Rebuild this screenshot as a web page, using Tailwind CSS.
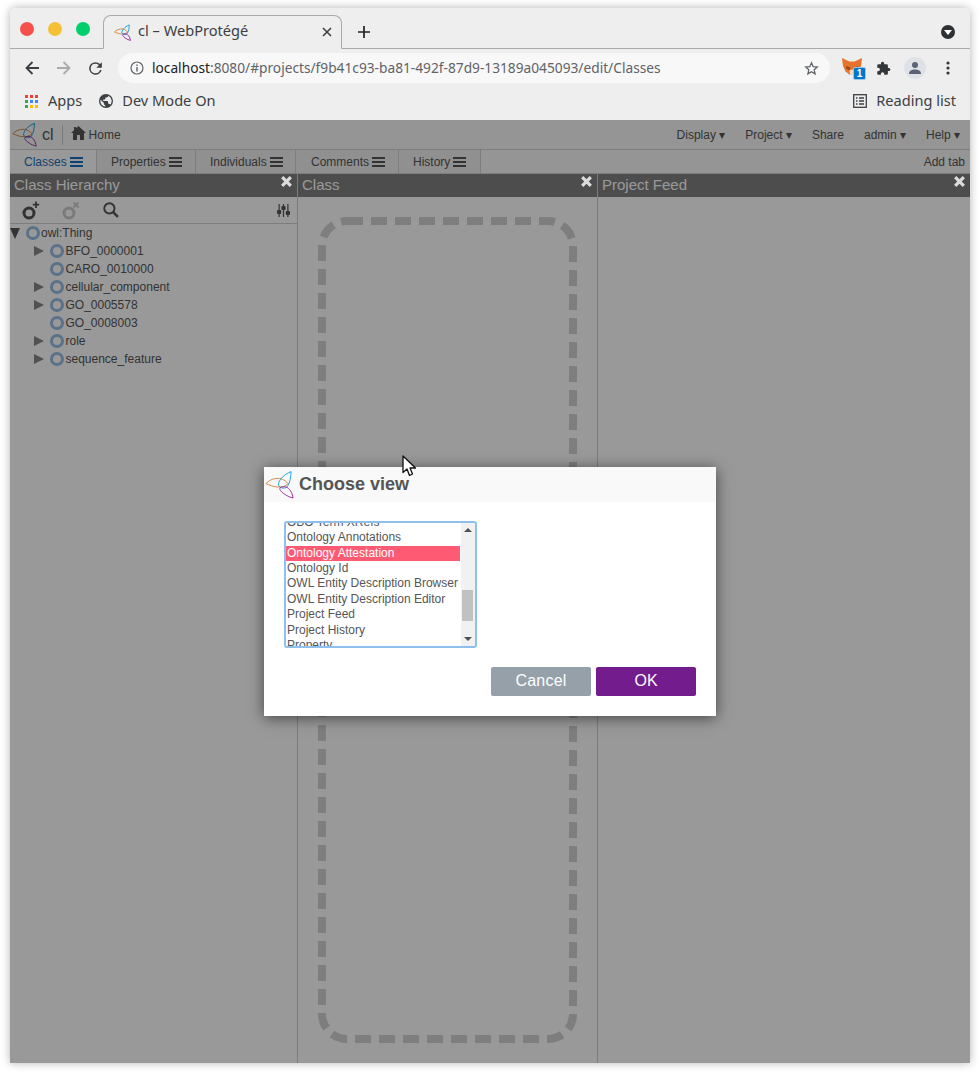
<!DOCTYPE html>
<html lang="en">
<head>
  <meta charset="UTF-8" />
  <title>cl – WebProtégé</title>
  <script src="https://cdn.jsdelivr.net/npm/@tailwindcss/browser@4"></script>
</head>
<body class="bg-white h-[1075px] overflow-hidden relative font-['Liberation_Sans',sans-serif]">
  <div class="absolute left-[10px] top-[8px] w-[960px] h-[1055px] shadow-[0_0_10px_rgba(0,0,0,0.3)] rounded-t-md flex flex-col bg-white">

    <!-- browser chrome -->
    <div class="h-[112px] bg-[#eeeeee] rounded-t-md font-['Noto_Sans',sans-serif] text-[14.6px] text-[#3c4043] shrink-0">
      <div class="h-[41px] border-b border-[#aaaaaa] flex items-end relative">
        <div class="flex gap-[14px] pl-[10px] pb-[12px] w-[93px]">
          <span class="w-[14px] h-[14px] rounded-full bg-[#f5504c] shrink-0"></span>
          <span class="w-[14px] h-[14px] rounded-full bg-[#f5c134] shrink-0"></span>
          <span class="w-[14px] h-[14px] rounded-full bg-[#00cf6b] shrink-0"></span>
        </div>
        <div class="w-[239px] h-[34px] -mb-px border border-[#aaaaaa] border-b-[#eeeeee] rounded-t-lg flex items-center pl-[10px] pr-[9px]">
          <svg class="w-[17px] h-[17px] shrink-0" viewBox="30 55 90 90" fill="none" stroke-width="5"><path d="M33 97C50 80 80 72 102 97C85 115 55 108 33 97Z" stroke="#d8873c"/><path d="M111 60C85 70 70 90 72 102C75 112 95 115 100 105C108 95 110 75 111 60Z" stroke="#1aa0d8"/><path d="M117 142C115 125 105 110 95 108C85 105 75 108 76 115C80 125 100 138 117 142Z" stroke="#9b2fa0"/></svg>
          <span class="ml-[7px] flex-1 whitespace-nowrap pb-[2px]">cl – WebProtégé</span>
          <svg class="w-[10px] h-[10px]" viewBox="0 0 10 10" stroke="#3c4043" stroke-width="1.6"><path d="M1 1L9 9M9 1L1 9"/></svg>
        </div>
        <svg class="ml-[16px] mb-[10px] w-[12px] h-[12px]" viewBox="0 0 12 12" stroke="#202124" stroke-width="1.7"><path d="M6 0V12M0 6H12"/></svg>
        <div class="ml-auto mr-[15px] mb-[9px] w-[14px] h-[14px] rounded-full bg-[#2e3134] flex items-center justify-center">
          <span class="w-0 h-0 border-x-[4px] border-x-transparent border-t-[5px] border-t-white mt-[1px]"></span>
        </div>
      </div>
      <div class="h-[38px] flex items-center pl-[15px] pr-[14px]">
        <svg class="w-[14px] h-[14px] shrink-0" viewBox="0 0 14 14" fill="none" stroke="#3c4043" stroke-width="1.8"><path d="M14 7H1.5M7.5 1L1.5 7L7.5 13"/></svg>
        <svg class="w-[14px] h-[14px] shrink-0 ml-[18px]" viewBox="0 0 14 14" fill="none" stroke="#a9abad" stroke-width="1.8"><path d="M0 7H12.5M6.5 1L12.5 7L6.5 13"/></svg>
        <svg class="w-[19px] h-[19px] shrink-0 ml-[15px]" viewBox="0 0 24 24" fill="#3c4043"><path d="M17.65 6.35A7.96 7.96 0 0 0 12 4a8 8 0 1 0 7.73 10h-2.08A6 6 0 1 1 12 6c1.66 0 3.14.69 4.22 1.78L13 11h7V4l-2.35 2.35z"/></svg>
        <div class="ml-[13px] w-[712px] h-[30px] rounded-full bg-[#f8f8f8] flex items-center pl-[12px] pr-[11px]">
          <svg class="w-[14px] h-[14px] shrink-0" viewBox="0 0 14 14" fill="none" stroke="#5f6368" stroke-width="1.2"><circle cx="7" cy="7" r="6"/><path d="M7 6V10.5M7 3.5V5" stroke-width="1.4"/></svg>
          <span class="ml-[8px] flex-1 whitespace-nowrap text-[#5f6368] text-[13.72px]"><span class="text-[#202124]">localhost</span>:8080/#projects/f9b41c93-ba81-492f-87d9-13189a045093/edit/Classes</span>
          <svg class="w-[15px] h-[15px] shrink-0" viewBox="0 0 24 24" fill="none" stroke="#5f6368" stroke-width="2"><path d="M12 3l2.7 6.1 6.6.6-5 4.4 1.5 6.5L12 17.2l-5.8 3.4 1.5-6.5-5-4.4 6.6-.6z"/></svg>
        </div>
        <div class="relative ml-[12px] w-[20px] h-[20px] shrink-0">
          <svg class="w-[20px] h-[18px]" viewBox="0 0 20 18"><path d="M0 0L7.5 3.5H12.5L20 0L19 8L16.5 13.5L12 17H8L3.5 13.5L1 8Z" fill="#e8722c"/><path d="M4 8L8.5 9.5L7.5 12L4.5 11ZM16 8L11.5 9.5L12.5 12L15.5 11Z" fill="#8a4a1c"/><path d="M7.5 12.5L10 11.5L12.5 12.5L12 17H8Z" fill="#ecd9c6"/></svg>
          <span class="absolute left-[11px] top-[9px] w-[13px] h-[13px] rounded-[2px] bg-[#0376c9] border border-white/60 text-white text-[10px] leading-[11px] font-bold text-center font-['Liberation_Sans',sans-serif]">1</span>
        </div>
        <svg class="w-[15px] h-[15px] shrink-0 ml-[14px]" viewBox="0 0 24 24" fill="#34373a"><path d="M20.5 11H19V7a2 2 0 0 0-2-2h-4V3.5a2.5 2.5 0 0 0-5 0V5H4a2 2 0 0 0-2 2v3.8h1.5a2.7 2.7 0 0 1 0 5.4H2V20a2 2 0 0 0 2 2h3.8v-1.5a2.7 2.7 0 0 1 5.4 0V22H17a2 2 0 0 0 2-2v-4h1.5a2.5 2.5 0 0 0 0-5z"/></svg>
        <div class="w-[22px] h-[22px] ml-[13px] rounded-full bg-[#dee1e6] flex items-center justify-center shrink-0">
          <svg class="w-[14px] h-[14px]" viewBox="0 0 14 14" fill="#5a6475"><circle cx="7" cy="4" r="3"/><path d="M1 13C1 9.5 4 8.5 7 8.5S13 9.5 13 13Z"/></svg>
        </div>
        <svg class="w-[4px] h-[14px] shrink-0 ml-[20px]" viewBox="0 0 4 14" fill="#34373a"><circle cx="2" cy="2" r="1.6"/><circle cx="2" cy="7" r="1.6"/><circle cx="2" cy="12" r="1.6"/></svg>
      </div>
      <div class="h-[28px] flex items-center pl-[15px] pr-[14px]">
        <svg class="w-[13px] h-[13px] shrink-0" viewBox="0 0 13 13">
          <rect width="3" height="3" fill="#ea4335"/><rect x="5" width="3" height="3" fill="#ea4335"/><rect x="10" width="3" height="3" fill="#ea4335"/>
          <rect y="5" width="3" height="3" fill="#34a853"/><rect x="5" y="5" width="3" height="3" fill="#4285f4"/><rect x="10" y="5" width="3" height="3" fill="#4285f4"/>
          <rect y="10" width="3" height="3" fill="#34a853"/><rect x="5" y="10" width="3" height="3" fill="#fbbc05"/><rect x="10" y="10" width="3" height="3" fill="#fbbc05"/>
        </svg>
        <span class="ml-[10px] pb-[1px]">Apps</span>
        <svg class="w-[14px] h-[14px] ml-[17px] shrink-0" viewBox="0 0 24 24" fill="#3c4043"><path d="M12 0a12 12 0 1 0 0 24a12 12 0 0 0 0-24zM10.8 21.5A9.6 9.6 0 0 1 2.4 12c0-.7.1-1.4.3-2.1L8.4 15.6v1.2c0 1.3 1.1 2.4 2.4 2.4zM19.1 18.5a2.4 2.4 0 0 0-2.3-1.7h-1.2v-3.6c0-.7-.5-1.2-1.2-1.2H7.2V9.6h2.4c.7 0 1.2-.5 1.2-1.2V6h2.4c1.3 0 2.4-1.1 2.4-2.4v-.5a9.6 9.6 0 0 1 3.5 15.4z"/></svg>
        <span class="ml-[9px] pb-[1px]">Dev Mode On</span>
        <svg class="w-[14px] h-[14px] ml-auto shrink-0" viewBox="0 0 14 14" fill="none" stroke="#3c4043" stroke-width="1.3"><rect x="0.7" y="0.7" width="12.6" height="12.6"/><path d="M3 4H4.5M6 4H11M3 7H4.5M6 7H11M3 10H4.5M6 10H11"/></svg>
        <span class="ml-[9px] pb-[1px]">Reading list</span>
      </div>
    </div>

    <!-- WebProtege page -->
    <div class="relative flex-1 flex flex-col text-[12px] text-[#555555] bg-white min-h-0">
      <div class="h-[30px] bg-[#f9f9f9] border-b border-[#d0d0d0] flex items-center pl-[2px] pr-[10px] shrink-0">
        <svg class="w-[25px] h-[25px] shrink-0" viewBox="30 55 90 90" fill="none" stroke-width="3.5"><path d="M33 97C50 80 80 72 102 97C85 115 55 108 33 97Z" stroke="#d8873c"/><path d="M111 60C85 70 70 90 72 102C75 112 95 115 100 105C108 95 110 75 111 60Z" stroke="#1aa0d8"/><path d="M117 142C115 125 105 110 95 108C85 105 75 108 76 115C80 125 100 138 117 142Z" stroke="#9b2fa0"/></svg>
        <span class="ml-[5px] text-[16px]">cl</span>
        <span class="ml-[8px] w-px h-[20px] bg-[#cccccc]"></span>
        <svg class="ml-[8px] w-[15px] h-[14px] mb-[3px] shrink-0" viewBox="0 0 15 14" fill="#555555"><path d="M7.5 0L15 7H13V14H9V9H6V14H2V7H0L3 4.2V1H5V2.3Z"/></svg>
        <span class="ml-[3px]">Home</span>
        <div class="ml-auto flex gap-[20px]">
          <span>Display ▾</span><span>Project ▾</span><span>Share</span><span>admin ▾</span><span>Help ▾</span>
        </div>
      </div>
      <div class="h-[24px] bg-[#f9f9f9] border-b border-[#d0d0d0] flex items-stretch shrink-0">
        <div class="w-[87px] pl-[14px] bg-[#ffffff] text-[#1a6fc0] border-r border-[#d0d0d0] flex items-center gap-[3px]">Classes<svg class="w-[13px] h-[10px]" viewBox="0 0 13 10" fill="#1a6fc0"><path d="M0 0H13V2H0ZM0 4H13V6H0ZM0 8H13V10H0Z"/></svg></div>
        <div class="w-[99px] pl-[14px] bg-[#f0f0f0] border-r border-[#d0d0d0] flex items-center gap-[3px]">Properties<svg class="w-[13px] h-[10px]" viewBox="0 0 13 10" fill="#555555"><path d="M0 0H13V2H0ZM0 4H13V6H0ZM0 8H13V10H0Z"/></svg></div>
        <div class="w-[100px] pl-[14px] bg-[#f0f0f0] border-r border-[#d0d0d0] flex items-center gap-[3px]">Individuals<svg class="w-[13px] h-[10px]" viewBox="0 0 13 10" fill="#555555"><path d="M0 0H13V2H0ZM0 4H13V6H0ZM0 8H13V10H0Z"/></svg></div>
        <div class="w-[103px] pl-[15px] bg-[#f0f0f0] border-r border-[#d0d0d0] flex items-center gap-[3px]">Comments<svg class="w-[13px] h-[10px]" viewBox="0 0 13 10" fill="#555555"><path d="M0 0H13V2H0ZM0 4H13V6H0ZM0 8H13V10H0Z"/></svg></div>
        <div class="w-[82px] pl-[14px] bg-[#f0f0f0] border-r border-[#d0d0d0] flex items-center gap-[3px]">History<svg class="w-[13px] h-[10px]" viewBox="0 0 13 10" fill="#555555"><path d="M0 0H13V2H0ZM0 4H13V6H0ZM0 8H13V10H0Z"/></svg></div>
        <span class="ml-auto pr-[5px] self-center">Add tab</span>
      </div>

      <div class="flex-1 flex min-h-0">
        <!-- class hierarchy -->
        <div class="w-[288px] border-r border-[#cfcfcf] flex flex-col shrink-0">
          <div class="h-[23px] bg-[#808080] text-white text-[15px] pl-[4px] flex items-center relative shrink-0">Class Hierarchy
            <svg class="absolute z-20 right-[5px] top-[2px] w-[11px] h-[11px]" viewBox="0 0 11 11" stroke="#dcdcdc" stroke-width="3.2"><path d="M1.2 1.2L9.8 9.8M9.8 1.2L1.2 9.8"/></svg>
          </div>
          <div class="h-[27px] border-b border-[#d0d0d0] flex items-center pl-[12px] pr-[7px] shrink-0">
            <svg class="w-[19px] h-[19px] shrink-0" viewBox="0 0 19 19" fill="none" stroke="#555555"><circle cx="7" cy="12" r="5" stroke-width="3"/><path d="M14 0.5V7M10.8 3.7H17.2" stroke-width="1.8"/></svg>
            <svg class="w-[19px] h-[19px] ml-[21px] shrink-0" viewBox="0 0 19 19" fill="none" stroke="#cccccc"><circle cx="7" cy="12" r="5" stroke-width="3"/><path d="M11.5 1.5L16.5 6.5M16.5 1.5L11.5 6.5" stroke-width="1.8"/></svg>
            <svg class="w-[16px] h-[16px] ml-[22px] shrink-0" viewBox="0 0 15 15" fill="none" stroke="#555555" stroke-width="1.8"><circle cx="6" cy="6" r="4.8"/><path d="M9.5 9.5L14 14" stroke-width="2.4"/></svg>
            <svg class="w-[13px] h-[13px] ml-auto shrink-0" viewBox="0 0 13 13" fill="#555555"><path d="M1.5 0H2.7V13H1.5ZM5.9 0H7.1V13H5.9ZM10.3 0H11.5V13H10.3Z"/><rect x="0" y="6" width="4.2" height="4" rx="1"/><rect x="4.4" y="2" width="4.2" height="4" rx="1"/><rect x="8.8" y="7" width="4.2" height="4" rx="1"/></svg>
          </div>
          <div class="flex flex-col">
            <div class="h-[18px] flex items-center"><span class="w-0 h-0 border-x-[5.5px] border-x-transparent border-t-[11px] border-t-[#555555]"></span><span class="ml-[6px] w-[14px] h-[14px] rounded-full border-[3.5px] border-[#94bfe3]"></span><span class="ml-[1px]">owl:Thing</span></div>
            <div class="h-[18px] flex items-center pl-[24px]"><span class="w-0 h-0 border-y-[5px] border-y-transparent border-l-[10px] border-l-[#888888]"></span><span class="ml-[6px] w-[14px] h-[14px] rounded-full border-[3.5px] border-[#94bfe3]"></span><span class="ml-[1.5px]">BFO_0000001</span></div>
            <div class="h-[18px] flex items-center pl-[40px]"><span class="w-[14px] h-[14px] rounded-full border-[3.5px] border-[#94bfe3]"></span><span class="ml-[1.5px]">CARO_0010000</span></div>
            <div class="h-[18px] flex items-center pl-[24px]"><span class="w-0 h-0 border-y-[5px] border-y-transparent border-l-[10px] border-l-[#888888]"></span><span class="ml-[6px] w-[14px] h-[14px] rounded-full border-[3.5px] border-[#94bfe3]"></span><span class="ml-[1.5px]">cellular_component</span></div>
            <div class="h-[18px] flex items-center pl-[24px]"><span class="w-0 h-0 border-y-[5px] border-y-transparent border-l-[10px] border-l-[#888888]"></span><span class="ml-[6px] w-[14px] h-[14px] rounded-full border-[3.5px] border-[#94bfe3]"></span><span class="ml-[1.5px]">GO_0005578</span></div>
            <div class="h-[18px] flex items-center pl-[40px]"><span class="w-[14px] h-[14px] rounded-full border-[3.5px] border-[#94bfe3]"></span><span class="ml-[1.5px]">GO_0008003</span></div>
            <div class="h-[18px] flex items-center pl-[24px]"><span class="w-0 h-0 border-y-[5px] border-y-transparent border-l-[10px] border-l-[#888888]"></span><span class="ml-[6px] w-[14px] h-[14px] rounded-full border-[3.5px] border-[#94bfe3]"></span><span class="ml-[1.5px]">role</span></div>
            <div class="h-[18px] flex items-center pl-[24px]"><span class="w-0 h-0 border-y-[5px] border-y-transparent border-l-[10px] border-l-[#888888]"></span><span class="ml-[6px] w-[14px] h-[14px] rounded-full border-[3.5px] border-[#94bfe3]"></span><span class="ml-[1.5px]">sequence_feature</span></div>
          </div>
        </div>
        <!-- class -->
        <div class="w-[300px] border-r border-[#cfcfcf] flex flex-col shrink-0">
          <div class="h-[23px] bg-[#808080] text-white text-[15px] pl-[4px] flex items-center relative shrink-0">Class
            <svg class="absolute z-20 right-[5px] top-[2px] w-[11px] h-[11px]" viewBox="0 0 11 11" stroke="#dcdcdc" stroke-width="3.2"><path d="M1.2 1.2L9.8 9.8M9.8 1.2L1.2 9.8"/></svg>
          </div>
          <div class="flex-1 pl-[20px] pr-[20px] pt-[20px] pb-[20px] min-h-0">
            <svg class="w-[259px] h-[826px] block" viewBox="0 0 259 826" fill="none"><rect x="4" y="4" width="251" height="818" rx="25" stroke="#d2d2d2" stroke-width="8" stroke-dasharray="16 8"/></svg>
          </div>
        </div>
        <!-- project feed -->
        <div class="flex-1 flex flex-col">
          <div class="h-[23px] bg-[#808080] text-white text-[15px] pl-[4px] flex items-center relative shrink-0">Project Feed
            <svg class="absolute z-20 right-[5px] top-[2px] w-[11px] h-[11px]" viewBox="0 0 11 11" stroke="#dcdcdc" stroke-width="3.2"><path d="M1.2 1.2L9.8 9.8M9.8 1.2L1.2 9.8"/></svg>
          </div>
        </div>
      </div>

      <!-- modal glass -->
      <div class="absolute inset-0 bg-black/40 z-10"></div>
      <div class="absolute z-30 left-[254px] top-[347px] w-[452px] h-[249px] bg-white shadow-[0_2px_14px_rgba(0,0,0,0.55)] flex flex-col">
        <div class="h-[35px] bg-[#f9f9f9] flex items-center pl-[1px] shrink-0">
          <svg class="w-[29px] h-[29px] shrink-0" viewBox="30 55 90 90" fill="none" stroke-width="3"><path d="M33 97C50 80 80 72 102 97C85 115 55 108 33 97Z" stroke="#d8873c"/><path d="M111 60C85 70 70 90 72 102C75 112 95 115 100 105C108 95 110 75 111 60Z" stroke="#1aa0d8"/><path d="M117 142C115 125 105 110 95 108C85 105 75 108 76 115C80 125 100 138 117 142Z" stroke="#9b2fa0"/></svg>
          <span class="ml-[5px] text-[18px] font-bold text-[#555555]">Choose view</span>
        </div>
        <div class="px-[20px] pt-[19px]">
          <div class="w-[193px] h-[127px] border-2 border-[#8dc0ec] rounded-[3px] flex overflow-hidden">
            <div class="w-[175px] flex flex-col whitespace-nowrap overflow-hidden pr-[1px]">
              <div class="-mt-[8.2px] h-[15.4px] leading-[15.4px] pl-[1px] shrink-0">OBO Term XRefs</div>
              <div class="h-[15.4px] leading-[15.4px] pl-[1px] shrink-0">Ontology Annotations</div>
              <div class="h-[15.4px] leading-[15.4px] pl-[1px] shrink-0 bg-[#ff5a73] text-white">Ontology Attestation</div>
              <div class="h-[15.4px] leading-[15.4px] pl-[1px] shrink-0">Ontology Id</div>
              <div class="h-[15.4px] leading-[15.4px] pl-[1px] shrink-0">OWL Entity Description Browser</div>
              <div class="h-[15.4px] leading-[15.4px] pl-[1px] shrink-0">OWL Entity Description Editor</div>
              <div class="h-[15.4px] leading-[15.4px] pl-[1px] shrink-0">Project Feed</div>
              <div class="h-[15.4px] leading-[15.4px] pl-[1px] shrink-0">Project History</div>
              <div class="h-[15.4px] leading-[15.4px] pl-[1px] shrink-0">Property</div>
            </div>
            <div class="w-[14px] bg-[#f1f1f1] flex flex-col items-center relative">
              <span class="mt-[5px] w-0 h-0 border-x-[4px] border-x-transparent border-b-[4px] border-b-[#505050]"></span>
              <span class="absolute left-[1px] top-[67px] w-[11px] h-[31px] bg-[#c1c1c1]"></span>
              <span class="mt-auto mb-[5px] w-0 h-0 border-x-[4px] border-x-transparent border-t-[4px] border-t-[#505050]"></span>
            </div>
          </div>
        </div>
        <div class="flex justify-end gap-[5px] pr-[20px] mt-[19px]">
          <button class="w-[100px] h-[29px] rounded-[2px] bg-[#95a0a9] text-white text-[16px] pb-[2px] tracking-[0.2px]">Cancel</button>
          <button class="w-[100px] h-[29px] rounded-[2px] bg-[#731c8d] text-white text-[16px] pb-[2px]">OK</button>
        </div>
      </div>
      <svg class="absolute z-40 left-[392px] top-[335px] w-[15px] h-[22px]" viewBox="0 0 15 22"><path d="M1 1V17.5L5 14L7.5 20.5L10.5 19L8 13H13.5Z" fill="#ffffff" stroke="#111111" stroke-width="1.3" stroke-linejoin="round"/></svg>
    </div>
  </div>
</body>
</html>
